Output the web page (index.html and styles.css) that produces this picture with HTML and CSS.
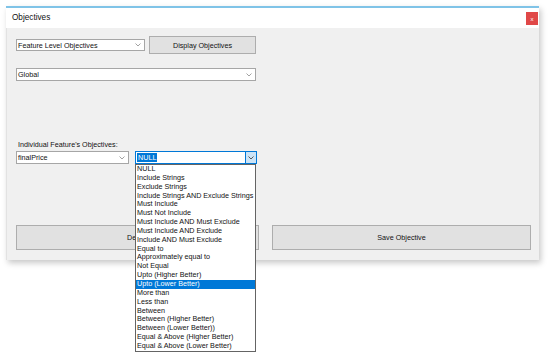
FILE: index.html
```html
<!DOCTYPE html>
<html lang="en">
<head>
  <meta charset="UTF-8">
  <title>Objectives</title>
  <link rel="stylesheet" href="styles.css">
</head>
<body>
  <div class="window">
    <div class="titlebar">
      <span class="title">Objectives</span>
      <span class="close">x</span>
    </div>
    <div class="content">
      <div class="row top-row">
        <div class="combo level">
          <span>Feature Level Objectives</span>
          <svg class="chev" width="6" height="4" viewBox="0 0 6 4"><polyline points="0.5,0.5 3,3 5.5,0.5" /></svg>
        </div>
        <button class="btn display">Display Objectives</button>
      </div>
      <div class="combo global">
        <span>Global</span>
        <svg class="chev" width="6" height="4" viewBox="0 0 6 4"><polyline points="0.5,0.5 3,3 5.5,0.5" /></svg>
      </div>
      <div class="label">Individual Feature's Objectives:</div>
      <div class="row feature-row">
        <div class="combo feature">
          <span>finalPrice</span>
          <svg class="chev" width="6" height="4" viewBox="0 0 6 4"><polyline points="0.5,0.5 3,3 5.5,0.5" /></svg>
        </div>
        <div class="combo objective">
          <span class="selected">NULL</span>
          <span class="drop-btn">
            <svg class="chev dark" width="6" height="4" viewBox="0 0 6 4"><polyline points="0.5,0.5 3,3 5.5,0.5" /></svg>
          </span>
          <ul class="dropdown">
            <li>NULL</li>
            <li>Include Strings</li>
            <li>Exclude Strings</li>
            <li>Include Strings AND Exclude Strings</li>
            <li>Must Include</li>
            <li>Must Not Include</li>
            <li>Must Include AND Must Exclude</li>
            <li>Must Include AND Exclude</li>
            <li>Include AND Must Exclude</li>
            <li>Equal to</li>
            <li>Approximately equal to</li>
            <li>Not Equal</li>
            <li>Upto (Higher Better)</li>
            <li class="active">Upto (Lower Better)</li>
            <li>More than</li>
            <li>Less than</li>
            <li>Between</li>
            <li>Between (Higher Better)</li>
            <li>Between (Lower Better))</li>
            <li>Equal &amp; Above (Higher Better)</li>
            <li>Equal &amp; Above (Lower Better)</li>
          </ul>
        </div>
      </div>
      <div class="actions">
        <button class="btn">Delete</button>
        <button class="btn">Save Objective</button>
      </div>
    </div>
  </div>
</body>
</html>
```

FILE: styles.css
```css
* {
  box-sizing: border-box;
}
html, body {
  height: 100%;
}
body {
  margin: 0;
  min-height: 359px;
  background: #ffffff;
  font-family: 'Liberation Sans', Arial, sans-serif;
  font-size: 7.2px;
  color: #111;
}
.window {
  margin: 6px 0 0 6px;
  width: 533px;
  border-top: 2px solid #7fc3e7;
  background: #ffffff;
  box-shadow: 2px 3px 6px rgba(0,0,0,0.22);
}
.titlebar {
  height: 20px;
  display: flex;
  align-items: flex-start;
  justify-content: space-between;
  padding: 0 1px 0 6px;
}
.title {
  font-size: 8.2px;
  margin-top: 5px;
}
.close {
  flex: none;
  width: 12px;
  height: 13px;
  margin-top: 4px;
  background: #e04848;
  color: #fff;
  font-size: 6px;
  display: flex;
  align-items: center;
  justify-content: center;
}
.content {
  height: 232px;
  background: #f0f0f0;
  padding: 8px 0 0 9px;
  border-left: 1px solid #e2e2e2;
}
.row {
  display: flex;
  align-items: center;
}
.top-row {
  height: 18px;
  gap: 4px;
}
.combo {
  flex: none;
  height: 12px;
  background: #fff;
  border: 1px solid #a6a6a6;
  display: flex;
  align-items: center;
  justify-content: space-between;
  padding: 0 3px 0 1px;
  white-space: nowrap;
}
.chev polyline {
  fill: none;
  stroke: #8a8a8a;
  stroke-width: 0.8;
}
.chev.dark polyline {
  stroke: #333;
}
.level {
  width: 129px;
}
.btn {
  font: inherit;
  color: #111;
  background: #e1e1e1;
  border: 1px solid #adadad;
  padding: 0;
}
.display {
  width: 107px;
  height: 18px;
}
.global {
  width: 240px;
  height: 13px;
  margin-top: 14px;
}
.label {
  margin-top: 59px;
  height: 10px;
  line-height: 10px;
  padding-left: 2px;
}
.feature-row {
  margin-top: 1px;
  height: 13px;
  gap: 6px;
}
.feature {
  width: 113px;
  height: 13px;
}
.objective {
  position: relative;
  width: 122px;
  height: 13px;
  border-color: #0078d7;
  padding: 0 0 0 1px;
}
.selected {
  background: #0078d7;
  color: #fff;
  line-height: 9px;
  padding: 0 1px;
}
.drop-btn {
  width: 11px;
  height: 11px;
  background: #cce4f7;
  border-left: 1px solid #0078d7;
  display: flex;
  align-items: center;
  justify-content: center;
}
.dropdown {
  position: absolute;
  top: 12px;
  left: -1px;
  width: 121px;
  margin: 0;
  padding: 0;
  list-style: none;
  background: #fff;
  border: 1px solid #646464;
  z-index: 2;
}
.dropdown li {
  height: 8.85px;
  line-height: 8.85px;
  padding-left: 1px;
  color: #111;
}
.dropdown li.active {
  background: #0078d7;
  color: #fff;
}
.actions {
  margin-top: 61px;
  display: grid;
  grid-template-columns: 243px 259px;
  gap: 13px;
}
.actions .btn {
  height: 25px;
}
```
